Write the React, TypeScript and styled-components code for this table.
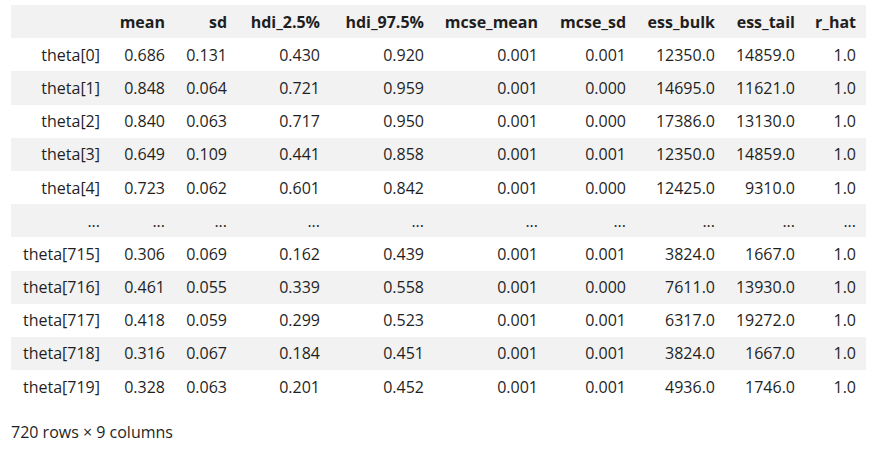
import styled, { createGlobalStyle } from 'styled-components';

const GlobalStyle = createGlobalStyle`
    body {
        margin: 0;
        background: #ffffff;
        font-family: "Open Sans", "Noto Sans", sans-serif;
        color: #1f1f1f;
    }
`;

const Wrapper = styled.div`
    padding: 5px 0 0 11px;
`;

const Table = styled.table`
    border-collapse: collapse;
    border-spacing: 0;
    table-layout: fixed;
    width: 855px;
    font-size: 16px;
`;

const Row = styled.tr<{ $shaded: boolean }>`
    height: 33.2px;
    background: ${(p) => (p.$shaded ? '#f2f2f2' : '#ffffff')};
`;

const HeadCell = styled.th`
    text-align: right;
    font-weight: 700;
    padding: 0 10px 0 0;
    white-space: nowrap;
    vertical-align: middle;
`;

const IndexCell = styled.th`
    text-align: right;
    font-weight: 400;
    padding: 0 10px 0 0;
    white-space: nowrap;
`;

const Cell = styled.td`
    text-align: right;
    padding: 0 10px 0 0;
    white-space: nowrap;
`;

const Footer = styled.p`
    margin: 18px 0 0 0;
    font-size: 16px;
`;

const widths = [99, 65, 62, 93, 104, 114, 88, 89, 80, 61];

const columns = ['mean', 'sd', 'hdi_2.5%', 'hdi_97.5%', 'mcse_mean', 'mcse_sd', 'ess_bulk', 'ess_tail', 'r_hat'];

const rows: [string, string[]][] = [
    ['theta[0]', ['0.686', '0.131', '0.430', '0.920', '0.001', '0.001', '12350.0', '14859.0', '1.0']],
    ['theta[1]', ['0.848', '0.064', '0.721', '0.959', '0.001', '0.000', '14695.0', '11621.0', '1.0']],
    ['theta[2]', ['0.840', '0.063', '0.717', '0.950', '0.001', '0.000', '17386.0', '13130.0', '1.0']],
    ['theta[3]', ['0.649', '0.109', '0.441', '0.858', '0.001', '0.001', '12350.0', '14859.0', '1.0']],
    ['theta[4]', ['0.723', '0.062', '0.601', '0.842', '0.001', '0.000', '12425.0', '9310.0', '1.0']],
    ['...', ['...', '...', '...', '...', '...', '...', '...', '...', '...']],
    ['theta[715]', ['0.306', '0.069', '0.162', '0.439', '0.001', '0.001', '3824.0', '1667.0', '1.0']],
    ['theta[716]', ['0.461', '0.055', '0.339', '0.558', '0.001', '0.000', '7611.0', '13930.0', '1.0']],
    ['theta[717]', ['0.418', '0.059', '0.299', '0.523', '0.001', '0.001', '6317.0', '19272.0', '1.0']],
    ['theta[718]', ['0.316', '0.067', '0.184', '0.451', '0.001', '0.001', '3824.0', '1667.0', '1.0']],
    ['theta[719]', ['0.328', '0.063', '0.201', '0.452', '0.001', '0.001', '4936.0', '1746.0', '1.0']],
];

const App = () => {
    return (
        <Wrapper>
            <GlobalStyle />
            <Table>
                <colgroup>
                    {widths.map((w, i) => (
                        <col key={i} style={{ width: w }} />
                    ))}
                </colgroup>
                <thead>
                    <Row $shaded>
                        <HeadCell />
                        {columns.map((c) => (
                            <HeadCell key={c}>{c}</HeadCell>
                        ))}
                    </Row>
                </thead>
                <tbody>
                    {rows.map(([name, values], i) => (
                        <Row key={i} $shaded={i % 2 === 1}>
                            <IndexCell>{name}</IndexCell>
                            {values.map((v, j) => (
                                <Cell key={j}>{v}</Cell>
                            ))}
                        </Row>
                    ))}
                </tbody>
            </Table>
            <Footer>720 rows × 9 columns</Footer>
        </Wrapper>
    );
};

export default App;
